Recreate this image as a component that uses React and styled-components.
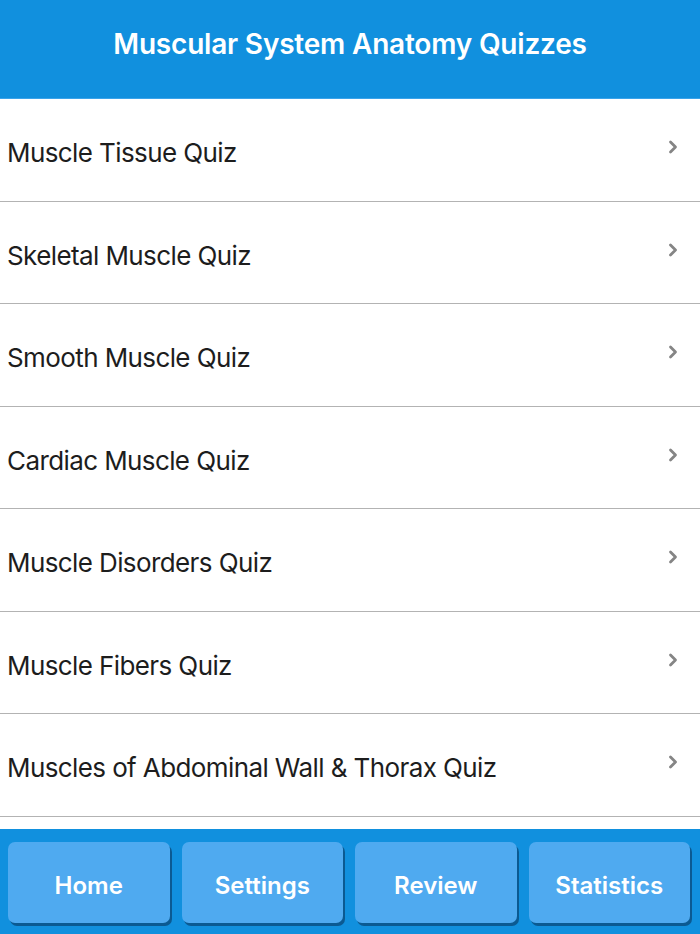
import React from "react";
import styled, { createGlobalStyle } from "styled-components";

const Global = createGlobalStyle`
  html, body { margin: 0; padding: 0; background: #fff; }
  body { font-family: "Inter", "Roboto", "Liberation Sans", sans-serif; }
`;

const Screen = styled.div`
  width: 700px;
  height: 934px;
  display: flex;
  flex-direction: column;
  overflow: hidden;
  background: #fff;
`;

const Header = styled.header`
  flex: none;
  height: 99px;
  box-sizing: border-box;
  background: #1190de;
  border-bottom: 1px solid #3aa3ea;
  display: flex;
  align-items: center;
  justify-content: center;
  padding-bottom: 10px;
`;

const Title = styled.h1`
  margin: 0;
  color: #fff;
  font-size: 28px;
  font-weight: 600;
  letter-spacing: -0.2px;
`;

const List = styled.ul`
  flex: 1;
  margin: 0;
  padding: 0;
  list-style: none;
  overflow: hidden;
`;

const Row = styled.li`
  height: 102.5px;
  box-sizing: border-box;
  border-bottom: 1px solid #b3b3b3;
  display: flex;
  align-items: center;
  justify-content: space-between;
  padding: 6px 22px 0 7px;
`;

const Label = styled.span`
  font-size: 26px;
  color: #1d1d1d;
  letter-spacing: -0.6px;
`;

const Chevron = styled.svg`
  width: 10px;
  height: 14px;
  margin-top: -11px;
  flex: none;
`;

const Footer = styled.nav`
  flex: none;
  height: 105px;
  background: #1190de;
  display: grid;
  grid-template-columns: repeat(4, minmax(0, 1fr));
  gap: 12px;
  padding: 13px 10px 8px 8px;
  box-sizing: border-box;
`;

const TabButton = styled.div`
  border-radius: 7px;
  background: #4faaf0;
  box-shadow: 2px 3px 0 #0b5a92;
  margin: 0 0 3px;
  padding: 6px 0 0;
  display: flex;
  align-items: center;
  justify-content: center;
  cursor: pointer;
`;

const TabLabel = styled.span`
  color: #fff;
  font-size: 24px;
  font-weight: 600;
  line-height: 30px;
  white-space: nowrap;
`;

const quizzes = [
  "Muscle Tissue Quiz",
  "Skeletal Muscle Quiz",
  "Smooth Muscle Quiz",
  "Cardiac Muscle Quiz",
  "Muscle Disorders Quiz",
  "Muscle Fibers Quiz",
  "Muscles of Abdominal Wall & Thorax Quiz",
  "Muscles of the Head & Neck Quiz",
];

const tabs = ["Home", "Settings", "Review", "Statistics"];

export default function App() {
  return (
    <>
      <Global />
      <Screen>
        <Header>
          <Title>Muscular System Anatomy Quizzes</Title>
        </Header>
        <List>
          {quizzes.map((q) => (
            <Row key={q}>
              <Label>{q}</Label>
              <Chevron viewBox="0 0 10 14">
                <path
                  d="M2.5 2 L7.5 7 L2.5 12"
                  fill="none"
                  stroke="#858585"
                  strokeWidth="2.8"
                  strokeLinecap="round"
                  strokeLinejoin="round"
                />
              </Chevron>
            </Row>
          ))}
        </List>
        <Footer>
          {tabs.map((t) => (
            <TabButton key={t} role="button">
              <TabLabel>{t}</TabLabel>
            </TabButton>
          ))}
        </Footer>
      </Screen>
    </>
  );
}
